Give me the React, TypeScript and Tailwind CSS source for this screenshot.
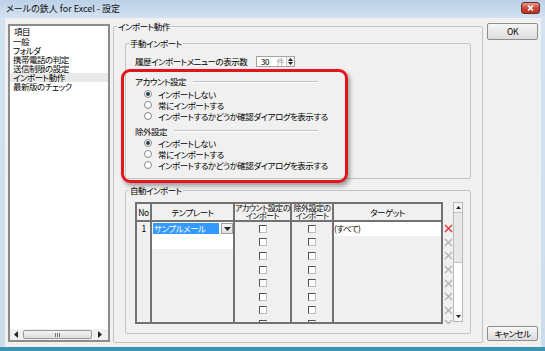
import React from 'react'

const rows = [0, 1, 2, 3, 4, 5, 6, 7]

function Tri({ dir }: { dir: 'up' | 'down' | 'left' | 'right' }) {
  const pts = {
    up: '0,4 3.5,0 7,4',
    down: '0,0 7,0 3.5,4',
    left: '4,0 4,7 0,3.5',
    right: '0,0 0,7 4,3.5',
  }[dir]
  const vertical = dir === 'up' || dir === 'down'
  return (
    <svg width={vertical ? 7 : 4} height={vertical ? 4 : 7} viewBox={vertical ? '0 0 7 4' : '0 0 4 7'}>
      <polygon points={pts} fill="#222" />
    </svg>
  )
}

function Radio({ checked }: { checked?: boolean }) {
  return (
    <span className="w-[8px] h-[8px] rounded-full border border-[#8a8a8a] bg-white flex items-center justify-center shrink-0">
      {checked && <span className="w-[4px] h-[4px] rounded-full bg-[#263b52]" />}
    </span>
  )
}

function RadioRow({ label, checked }: { label: string; checked?: boolean }) {
  return (
    <div className="flex items-center h-[11px] pl-[9px] gap-[6px] whitespace-nowrap">
      <Radio checked={checked} />
      <span>{label}</span>
    </div>
  )
}

function Heading({ label }: { label: string }) {
  return (
    <div className="flex items-center h-[11px] w-[183px] whitespace-nowrap">
      <span>{label}</span>
      <span className="flex-1 ml-[7px] h-[2px] border-t border-[#c3c3c3] border-b border-b-white" />
    </div>
  )
}

function Check() {
  return (
    <span className="block w-[8px] h-[8px] bg-white border border-t-[#505050] border-l-[#505050] border-r-[#bcbcbc] border-b-[#bcbcbc]" />
  )
}

function XMark({ red }: { red?: boolean }) {
  return (
    <svg width="9" height="9" viewBox="0 0 9 9">
      <path d="M1 1L8 8M8 1L1 8" stroke={red ? '#e3262a' : '#b0b0b0'} strokeWidth="1.2" />
    </svg>
  )
}

export default function App() {
  return (
    <div className="w-[545px] h-[351px] relative overflow-hidden flex flex-col bg-[linear-gradient(#bcd0e7,#d4e2f1_18px,#cddcec)] border-b-[4px] border-b-[#3e93b3] font-['Noto_Sans_CJK_JP',sans-serif] [font-feature-settings:'palt'] text-[8.5px] tracking-[-0.5px] leading-[11px] text-black">
      {/* Title bar */}
      <div className="h-[18px] shrink-0 flex items-center justify-between pl-[6px] pr-[5px]">
        <span className="text-[9px] tracking-[0px] leading-[12px] text-[#111]">メールの鉄人 for Excel - 設定</span>
        <div className="w-[19px] h-[12px] mt-[-3px] rounded-[3px] border border-[#6e2a25] bg-[linear-gradient(#e59a8e,#c9493a_50%,#b7321f)] flex items-center justify-center">
          <svg width="7" height="6" viewBox="0 0 7 6">
            <path d="M1 0.5L6 5.5M6 0.5L1 5.5" stroke="#fff" strokeWidth="1.6" />
          </svg>
        </div>
      </div>

      {/* Client area */}
      <div className="ml-[5px] mr-[4px] h-[329px] bg-[#f0f0f0] flex pl-[3px]">
        {/* Left list */}
        <div className="mt-[6px] w-[102px] h-[318px] border-2 border-[#8c8c8c] bg-white flex flex-col">
          <div className="h-[11px] leading-[11px] pl-[4px]">項目</div>
          {['一般', 'フォルダ', '携帯電話の判定', '送信制限の設定', 'インポート動作', '最新版のチェック'].map((t) => (
            <div
              key={t}
              className={t === 'インポート動作' ? 'h-[9px] leading-[9px] pl-[3px] bg-[#e9e9e9]' : 'h-[9px] leading-[9px] pl-[3px]'}
            >
              {t}
            </div>
          ))}
          <div className="flex-1" />
          <div className="h-[11px] flex items-center bg-[#f0f0f0]">
            <div className="w-[11px] flex justify-center">
              <Tri dir="left" />
            </div>
            <div className="ml-[2px] w-[69px] h-[9px] rounded-[2px] border border-[#999] bg-[linear-gradient(#f4f4f4,#dcdcdc)] flex items-center justify-center gap-[1px]">
              <span className="w-px h-[4px] bg-[#777]" />
              <span className="w-px h-[4px] bg-[#777]" />
              <span className="w-px h-[4px] bg-[#777]" />
            </div>
            <div className="flex-1 flex justify-center">
              <Tri dir="right" />
            </div>
          </div>
        </div>

        {/* Import settings group */}
        <fieldset className="ml-[3px] mt-[2px] w-[370px] h-[323px] border border-[#c4c4c4] rounded-[2px]">
          <legend className="ml-[3px] px-[1px] leading-[12px]">インポート動作</legend>
          <div className="pl-[11px] pt-[5px] w-[357px]">
            <fieldset className="h-[142px] border border-[#c4c4c4] rounded-[2px]">
              <legend className="ml-[3px] px-[1px] leading-[12px]">手動インポート</legend>
              <div className="pl-[9px]">
                <div className="mt-[7px] h-[11px] flex items-center">
                  <span className="w-[121px] whitespace-nowrap">履歴インポートメニューの表示数</span>
                  <div className="w-[39px] h-[11px] border border-[#a3a3a3] bg-white flex items-center">
                    <span className="ml-[4px] text-[8px]">30</span>
                    <span className="ml-auto mr-[2px] text-[8px] text-[#9a9a9a]">件</span>
                    <div className="w-[8px] h-full border-l border-[#c8c8c8] flex flex-col items-center justify-around bg-[#f2f2f2]">
                      <svg width="5" height="3" viewBox="0 0 5 3"><polygon points="0,3 2.5,0 5,3" fill="#222" /></svg>
                      <svg width="5" height="3" viewBox="0 0 5 3"><polygon points="0,0 5,0 2.5,3" fill="#222" /></svg>
                    </div>
                  </div>
                </div>
                <div className="mt-[9px]">
                  <Heading label="アカウント設定" />
                </div>
                <div className="mt-[1.5px]">
                  <RadioRow label="インポートしない" checked />
                  <RadioRow label="常にインポートする" />
                  <RadioRow label="インポートするかどうか確認ダイアログを表示する" />
                </div>
                <div className="mt-[4px]">
                  <Heading label="除外設定" />
                </div>
                <div className="mt-[1px]">
                  <RadioRow label="インポートしない" checked />
                  <RadioRow label="常にインポートする" />
                  <RadioRow label="インポートするかどうか確認ダイアログを表示する" />
                </div>
              </div>
            </fieldset>

            <fieldset className="mt-[5px] h-[150px] border border-[#c4c4c4] rounded-[2px]">
              <legend className="ml-[3px] px-[1px] leading-[12px]">自動インポート</legend>
              <div className="pl-[9px] mt-[6px] flex">
                {/* Table */}
                <div className="flex w-[308px] h-[122px] border-2 border-[#727272] overflow-hidden">
                  <div className="w-[15px] shrink-0 border-r-2 border-[#727272]">
                    <div className="h-[18px] border-b-2 border-[#727272] flex items-center justify-center">No</div>
                    <div className="h-[13.6px] flex items-center justify-center">1</div>
                  </div>
                  <div className="w-[83px] shrink-0 border-r-2 border-[#727272]">
                    <div className="h-[18px] border-b-2 border-[#727272] flex items-center justify-center">テンプレート</div>
                    <div className="h-[13.6px] bg-white flex items-center pl-[1px]">
                      <span className="w-[66px] h-[11px] bg-[#3399ff] text-white pl-[1px] whitespace-nowrap">サンプルメール</span>
                      <span className="ml-[2px] w-[12px] h-[11px] border border-[#a0a0a0] bg-[linear-gradient(#f6f6f6,#dedede)] flex items-center justify-center">
                        <Tri dir="down" />
                      </span>
                    </div>
                    <div className="h-[13.6px] bg-white" />
                  </div>
                  <div className="w-[57px] shrink-0 border-r-2 border-[#727272]">
                    <div className="h-[18px] border-b-2 border-[#727272] flex flex-col items-center justify-center leading-[8px] whitespace-nowrap text-[8px]">
                      <span>アカウント設定の</span>
                      <span>インポート</span>
                    </div>
                    {rows.map((r) => (
                      <div key={r} className="h-[13.6px] flex items-center justify-center">
                        <Check />
                      </div>
                    ))}
                  </div>
                  <div className="w-[42px] shrink-0 border-r-2 border-[#727272]">
                    <div className="h-[18px] border-b-2 border-[#727272] flex flex-col items-center justify-center leading-[8px] whitespace-nowrap text-[8px]">
                      <span>除外設定の</span>
                      <span>インポート</span>
                    </div>
                    {rows.map((r) => (
                      <div key={r} className="h-[13.6px] flex items-center justify-center">
                        <Check />
                      </div>
                    ))}
                  </div>
                  <div className="flex-1">
                    <div className="h-[18px] border-b-2 border-[#727272] flex items-center justify-center">ターゲット</div>
                    <div className="h-[13.6px] bg-white flex items-center whitespace-nowrap">(すべて)</div>
                  </div>
                </div>

                {/* Delete marks */}
                <div className="w-[10px] h-[122px] pt-[20px] overflow-hidden">
                  {rows.map((r) => (
                    <div key={r} className="h-[13.6px] flex items-center justify-center">
                      <XMark red={r === 0} />
                    </div>
                  ))}
                </div>

                {/* Scrollbar */}
                <div className="w-[10px] h-[120px] border border-[#b9b9b9] flex flex-col bg-white">
                  <div className="h-[9px] bg-[#f4f4f4] flex items-center justify-center">
                    <svg width="5" height="3" viewBox="0 0 5 3"><polygon points="0,3 2.5,0 5,3" fill="#222" /></svg>
                  </div>
                  <div className="h-[51px] bg-[#e8e8e8] border-y border-[#c4c4c4]" />
                  <div className="flex-1 bg-white" />
                  <div className="h-[9px] bg-[#f4f4f4] flex items-center justify-center">
                    <svg width="5" height="3" viewBox="0 0 5 3"><polygon points="0,0 5,0 2.5,3" fill="#222" /></svg>
                  </div>
                </div>
              </div>
            </fieldset>
          </div>
        </fieldset>

        {/* Buttons */}
        <div className="ml-[4px] mt-[5px] w-[51px] h-[318px] flex flex-col justify-between">
          <button className="h-[17px] rounded-[2px] border border-[#8e8e8e] bg-[linear-gradient(#f7f7f7,#e9e9e9_50%,#dcdcdc)] text-[8.5px] leading-[11px]">
            OK
          </button>
          <button className="h-[15px] rounded-[2px] border border-[#8e8e8e] bg-[linear-gradient(#f7f7f7,#e9e9e9_50%,#dcdcdc)] text-[8.5px] leading-[11px]">
            キャンセル
          </button>
        </div>
      </div>

      {/* Red highlight annotation */}
      <div className="absolute left-[121px] top-[69px] w-[227px] h-[114px] rounded-[9px] border-[3.5px] border-[#e3141b] shadow-[2px_3px_4px_rgba(0,0,0,0.35)]" />
    </div>
  )
}
